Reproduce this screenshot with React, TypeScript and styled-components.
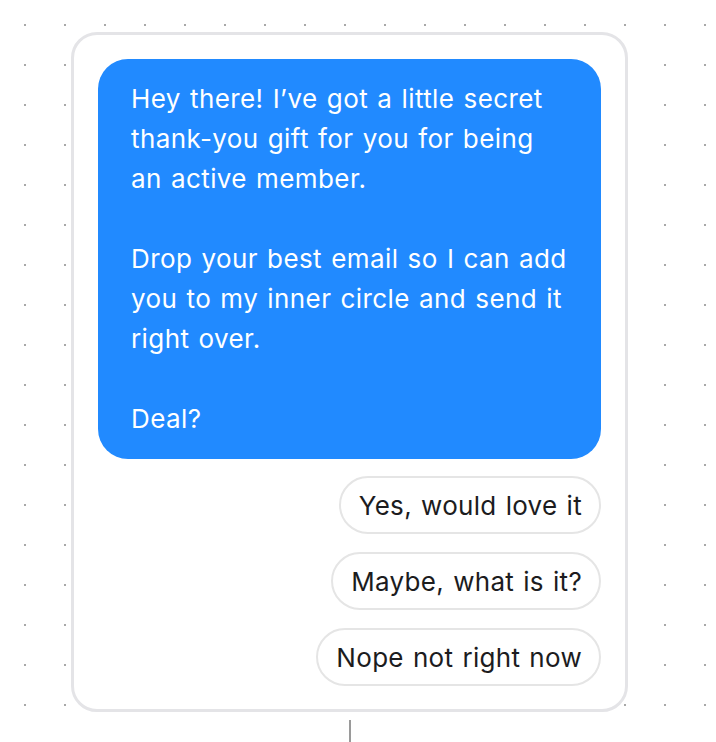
import styled, { createGlobalStyle } from "styled-components";

const GlobalStyle = createGlobalStyle`
    html, body {
        margin: 0;
        padding: 0;
    }
    body {
        background-color: #ffffff;
        background-image: radial-gradient(circle, #a8a8a8 1px, transparent 1.3px);
        background-size: 40px 40px;
        background-position: 5px 5px;
        font-family: Inter, "Noto Sans", sans-serif;
        min-height: 742px;
    }
`;

const replies = ["Yes, would love it", "Maybe, what is it?", "Nope not right now"];

const App = () => {
    return (
        <>
            <GlobalStyle />
            <Canvas>
                <Card>
                    <Bubble>
                        <p>Hey there! I’ve got a little secret thank-you gift for you for being an active member.</p>
                        <p>Drop your best email so I can add you to my inner circle and send it right over.</p>
                        <p>Deal?</p>
                    </Bubble>
                    <ReplyList>
                        {replies.map((r) => (
                            <ReplyButton key={r}>{r}</ReplyButton>
                        ))}
                    </ReplyList>
                </Card>
                <Connector />
            </Canvas>
        </>
    );
};

export default App;

const Canvas = styled.div`
    display: flex;
    flex-direction: column;
    padding: 32px 0 0 71px;
`;

const Card = styled.div`
    box-sizing: border-box;
    width: 557px;
    height: 680px;
    padding: 24px;
    border: 3px solid #e4e4e7;
    border-radius: 26px;
    background: #ffffff;
    display: flex;
    flex-direction: column;
    gap: 17px;
`;

const Bubble = styled.div`
    background: #218aff;
    color: #ffffff;
    border-radius: 30px;
    padding: 20px 33px 20px 33px;
    font-size: 26px;
    line-height: 40px;
    letter-spacing: 0.4px;
    word-spacing: 1.5px;

    p {
        margin: 0 0 40px;
    }
    p:last-child {
        margin-bottom: 0;
    }
`;

const ReplyList = styled.div`
    display: flex;
    flex-direction: column;
    align-items: flex-end;
    gap: 18px;
`;

const ReplyButton = styled.button`
    box-sizing: border-box;
    height: 58px;
    padding: 0 17px 0 18px;
    border: 2px solid #e5e5e5;
    border-radius: 29px;
    background: #ffffff;
    color: #1c1c1e;
    font-family: Inter, "Noto Sans", sans-serif;
    font-size: 26px;
    letter-spacing: 0.3px;
    word-spacing: 1.5px;
    cursor: pointer;
`;

const Connector = styled.div`
    width: 2px;
    height: 22px;
    margin: 8px 0 0 278px;
    background: #9a9a9a;
`;
